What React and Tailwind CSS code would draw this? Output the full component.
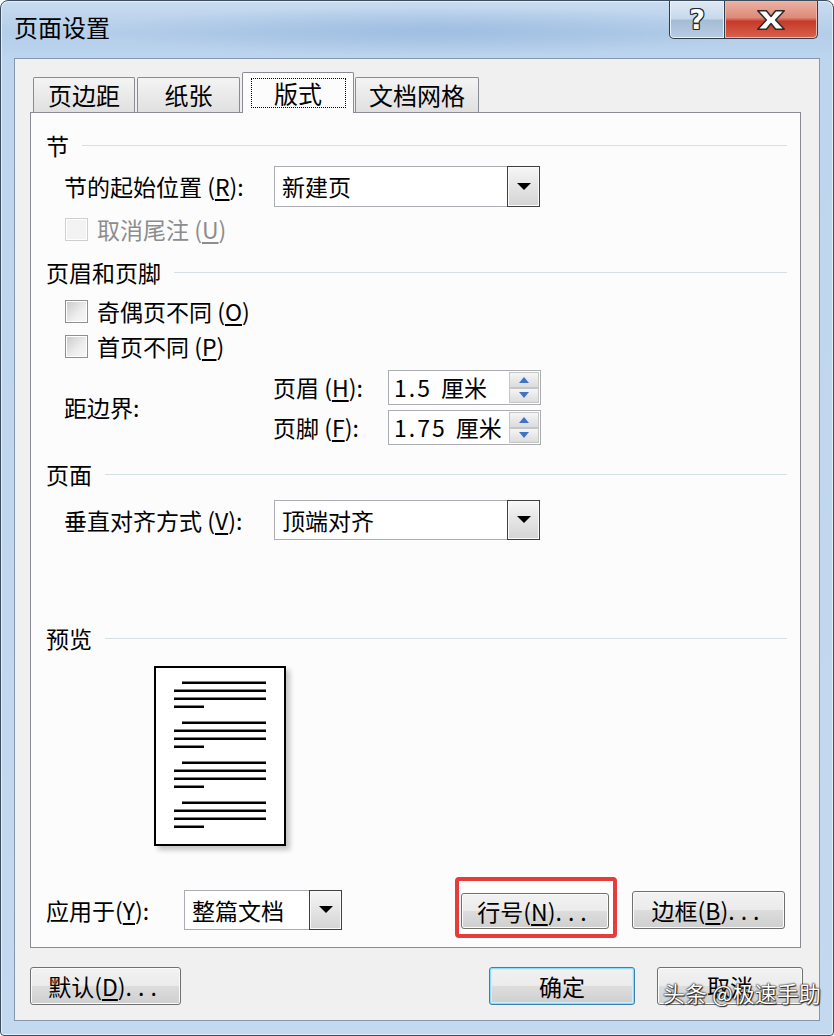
import React from "react";

const font = "font-['Noto_Sans_CJK_SC','Noto_Sans',sans-serif]";

const M = ({ c }) => (
  <span>
    {" "}(<span className="underline underline-offset-[3px]">{c}</span>)
  </span>
);

const Dots = () => <span className="tracking-[6px]">...</span>;

const Btn = ({ children, className = "", primary = false }) => (
  <div
    className={`flex items-center justify-center rounded-[3px] border text-[23px] leading-none text-black bg-[linear-gradient(to_bottom,#f2f2f2_0%,#ebebeb_50%,#dddddd_50%,#cfcfcf_100%)] ${
      primary
        ? "border-[#3c7fb1] shadow-[inset_0_0_0_1px_#8fdcf8,inset_0_0_0_2px_#cdeffb]"
        : "border-[#707070] shadow-[inset_0_0_0_1px_#fbfbfb]"
    } ${className}`}
  >
    {children}
  </div>
);

const Arrow = () => (
  <svg width="14" height="8" viewBox="0 0 14 8">
    <polygon points="0,0 14,0 7,7" fill="#000" />
  </svg>
);

const Combo = ({ value, className = "" }) => (
  <div className={`flex border border-[#abadb3] bg-white ${className}`}>
    <div className="flex flex-1 items-center pl-[7px] text-[23px] leading-none">{value}</div>
    <div className="-my-px -mr-px flex w-[33px] items-center justify-center border border-[#3f3f3f] bg-gradient-to-b from-[#f6f6f6] to-[#d4d4d4] shadow-[inset_0_0_0_1px_#fafafa]">
      <Arrow />
    </div>
  </div>
);

const SpinHalf = ({ up }) => (
  <div className="flex flex-1 items-center justify-center border border-[#c6c6c6] bg-gradient-to-b from-[#f5f5f5] to-[#dcdcdc]">
    <svg width="10" height="6" viewBox="0 0 10 6">
      <polygon points={up ? "0,6 10,6 5,0" : "0,0 10,0 5,6"} fill="#3f73c8" />
    </svg>
  </div>
);

const Spin = ({ num }) => (
  <div className="flex h-[35px] w-[153px] border border-[#abadb3] bg-white">
    <div className="flex flex-1 items-center pl-[5px] text-[23px] leading-none">
      <span className="tracking-[2px]">{num}</span>
      <span className="ml-[9px]">厘米</span>
    </div>
    <div className="flex w-[31px] flex-col py-[1px] pr-[1px]">
      <SpinHalf up />
      <SpinHalf />
    </div>
  </div>
);

const Check = ({ disabled }) => (
  <div
    className={`h-[23px] w-[23px] border shadow-[inset_0_0_0_1px_#ffffff] ${
      disabled
        ? "border-[#cfcfcf] bg-[#f3f3f3]"
        : "border-[#8e8f8f] bg-[linear-gradient(135deg,#c9c9c9,#eeeeee_60%,#f8f8f8)]"
    }`}
  />
);

const Section = ({ title, className = "" }) => (
  <div className={`flex h-[28px] items-center gap-[13px] ${className}`}>
    <span className="text-[23px] leading-none">{title}</span>
    <div className="h-px flex-1 bg-[#d5dfe6]" />
  </div>
);

const Tab = ({ label, className = "" }) => (
  <div
    className={`flex h-[35px] items-center justify-center rounded-t-[2px] border border-b-0 border-[#898c95] bg-gradient-to-b from-[#f4f4f4] to-[#e0e0e0] text-[24px] leading-none ${className}`}
  >
    {label}
  </div>
);

const PreviewPage = () => (
  <div className="ml-[108px] h-[180px] w-[132px] border-2 border-black bg-white shadow-[4px_4px_5px_rgba(0,0,0,0.22)]">
    <svg width="128" height="176" viewBox="0 0 128 176">
      {[0, 40, 80, 120].map((o) => (
        <g key={o} fill="#000">
          <rect x="26" y={13.5 + o} width="84" height="2.5" />
          <rect x="18" y={21.5 + o} width="92" height="2.5" />
          <rect x="18" y={29.5 + o} width="92" height="2.5" />
          <rect x="18" y={37.5 + o} width="30" height="2.5" />
        </g>
      ))}
    </svg>
  </div>
);

export default function App() {
  return (
    <div
      className={`relative flex h-[1036px] w-[834px] flex-col rounded-t-[8px] rounded-b-[4px] border border-[#3d4d5e] bg-[linear-gradient(to_bottom,#c9dcf0_0px,#b4cde9_32px,#bdd5ee_58px,#c3d9f0_100%)] shadow-[inset_0_0_0_1px_#e4eef9] text-black ${font}`}
    >
      {/* title bar */}
      <div className="flex h-[57px] items-start justify-between bg-[radial-gradient(ellipse_340px_24px_at_430px_30px,#9fbee2,transparent)]">
        <div className="ml-[13px] mt-[14px] text-[24px] leading-none">页面设置</div>
        <div className="mr-[15px] flex h-[38px]">
          <div className="flex w-[56px] items-center justify-center rounded-bl-[5px] border border-t-0 border-[#2e3c4c] bg-[linear-gradient(to_bottom,#dfe9f5_0%,#c8d8ea_48%,#a5bcd6_52%,#b8cce2_100%)] shadow-[inset_0_0_0_1px_#e9f0f8]">
            <span className="font-['DejaVu_Sans',sans-serif] text-[27px] font-bold leading-none text-white [text-shadow:1px_1px_0_#1f2a36,-1px_-1px_0_#1f2a36,1px_-1px_0_#1f2a36,-1px_1px_0_#1f2a36,0_1px_0_#1f2a36,0_-1px_0_#1f2a36,1px_0_0_#1f2a36,-1px_0_0_#1f2a36]">
              ?
            </span>
          </div>
          <div className="flex w-[93px] items-center justify-center rounded-br-[5px] border border-l-0 border-t-0 border-[#2e3c4c] bg-[linear-gradient(to_bottom,#ecb2a5_0%,#dd8a78_45%,#c63a28_55%,#d8624c_100%)] shadow-[inset_0_0_0_1px_#efb9ac]">
            <svg width="30" height="22" viewBox="0 0 26 19">
              <polygon
                points="1.5,1.5 9,1.5 13,6.5 17,1.5 24.5,1.5 17,9.5 24.5,17.5 17,17.5 13,12.5 9,17.5 1.5,17.5 9,9.5"
                fill="#fff"
                stroke="#2a2a2a"
                strokeWidth="1.3"
                strokeLinejoin="round"
              />
            </svg>
          </div>
        </div>
      </div>

      {/* client area */}
      <div className="ml-[13px] flex h-[963px] w-[806px] flex-col border border-[#8497ad] bg-[#f0f0f0] pl-[15px] pt-[13px]">
        {/* tabs */}
        <div className="flex h-[40px] items-end pl-[3px]">
          <Tab label="页边距" className="w-[102px]" />
          <Tab label="纸张" className="ml-[2px] w-[103px]" />
          <div className="relative z-10 -mb-px ml-[2px] flex h-[41px] w-[112px] items-center justify-center rounded-t-[2px] border border-b-0 border-[#898c95] bg-[#fcfcfc]">
            <span className="flex h-[30px] w-[95px] items-center justify-center border border-dotted border-black text-[24px] leading-none">
              版式
            </span>
          </div>
          <Tab label="文档网格" className="ml-[1px] w-[124px]" />
        </div>

        {/* panel */}
        <div className="flex h-[836px] w-[771px] flex-col border border-[#898c95] bg-[#fcfcfc] pl-[15px] pr-[13px]">
          <Section title="节" className="mt-[18px]" />
          <div className="mt-[7px] flex h-[41px] items-center pl-[18px]">
            <div className="w-[210px] text-[23px] leading-none">
              节的起始位置<M c="R" />:
            </div>
            <Combo value="新建页" className="h-[41px] w-[266px]" />
          </div>
          <div className="mt-[10px] flex h-[24px] items-center pl-[19px]">
            <Check disabled />
            <span className="ml-[9px] text-[23px] leading-none text-[#8d8d8d]">
              取消尾注<M c="U" />
            </span>
          </div>

          <Section title="页眉和页脚" className="mt-[17px]" />
          <div className="mt-[13px] flex h-[24px] items-center pl-[19px]">
            <Check />
            <span className="ml-[9px] text-[23px] leading-none">
              奇偶页不同<M c="O" />
            </span>
          </div>
          <div className="mt-[11px] flex h-[24px] items-center pl-[19px]">
            <Check />
            <span className="ml-[9px] text-[23px] leading-none">
              首页不同<M c="P" />
            </span>
          </div>
          <div className="mt-[12px] flex h-[75px] items-center pl-[18px]">
            <div className="w-[209px] text-[23px] leading-none">距边界:</div>
            <div className="flex flex-col gap-[5px]">
              <div className="flex items-center">
                <div className="w-[115px] text-[23px] leading-none">
                  页眉<M c="H" />:
                </div>
                <Spin num="1.5" />
              </div>
              <div className="flex items-center">
                <div className="w-[115px] text-[23px] leading-none">
                  页脚<M c="F" />:
                </div>
                <Spin num="1.75" />
              </div>
            </div>
          </div>

          <Section title="页面" className="mt-[15px]" />
          <div className="mt-[12px] flex h-[40px] items-center pl-[18px]">
            <div className="w-[210px] text-[23px] leading-none">
              垂直对齐方式<M c="V" />:
            </div>
            <Combo value="顶端对齐" className="h-[40px] w-[266px]" />
          </div>

          <Section title="预览" className="mt-[84px]" />
          <div className="mt-[14px]">
            <PreviewPage />
          </div>

          <div className="mt-[44px] flex h-[40px] items-start">
            <div className="flex h-[40px] w-[138px] items-center text-[23px] leading-none">
              应用于<M c="Y" />:
            </div>
            <Combo value="整篇文档" className="h-[40px] w-[158px]" />
            <div className="-mt-[13px] ml-[113px] h-[61px] w-[162px] rounded-[4px] border-[4px] border-[#e63c3c] bg-white pl-[2px] pt-[12px]">
              <Btn className="h-[36px] w-[148px]">
                行号<M c="N" />
                <Dots />
              </Btn>
            </div>
            <Btn className="ml-[15px] mt-[1px] h-[38px] w-[153px]">
              边框<M c="B" />
              <Dots />
            </Btn>
          </div>
        </div>

        {/* dialog buttons */}
        <div className="mt-[19px] flex h-[38px]">
          <Btn className="w-[151px]">
            默认<M c="D" />
            <Dots />
          </Btn>
          <Btn primary className="ml-[308px] w-[146px]">
            确定
          </Btn>
          <Btn className="ml-[22px] w-[146px]">取消</Btn>
        </div>
      </div>

      {/* watermark */}
      <div className="absolute left-[662px] top-[980px] text-[22px] leading-none text-white [text-shadow:0_0_2px_#000,0_0_1px_#000,1px_1px_1px_#333]">
        头条 @极速手助
      </div>
    </div>
  );
}
